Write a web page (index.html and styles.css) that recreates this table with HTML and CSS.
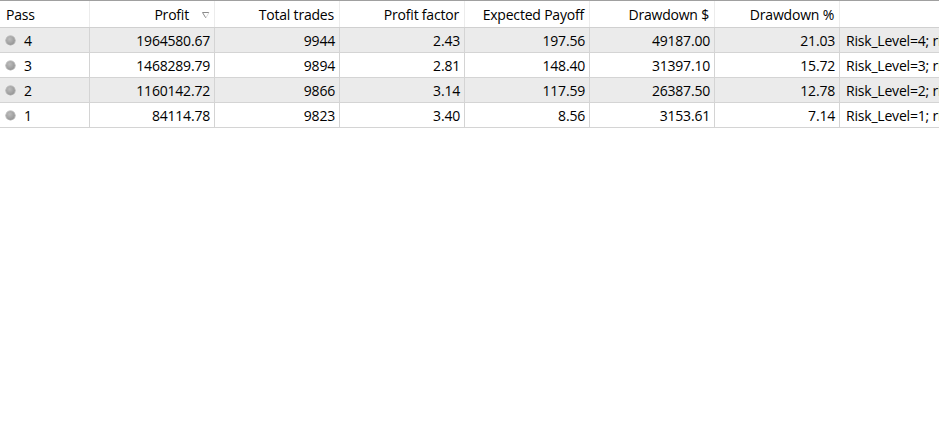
FILE: index.html
```html
<!DOCTYPE html>
<html>
<head>
<meta charset="utf-8">
<link rel="stylesheet" href="styles.css">
</head>
<body>
<div class="table">
  <div class="row head">
    <div class="cell left">Pass</div>
    <div class="cell sorted">Profit<svg class="sort" width="8" height="7" viewBox="0 0 8 7"><path d="M0.5 0.5 H7 M0.5 0.5 L3.8 6" stroke="#8a8a8a" stroke-width="1" fill="none"/><path d="M7 0.5 L3.8 6" stroke="#d8d8d8" stroke-width="1" fill="none"/></svg></div>
    <div class="cell">Total trades</div>
    <div class="cell">Profit factor</div>
    <div class="cell">Expected Payoff</div>
    <div class="cell">Drawdown $</div>
    <div class="cell">Drawdown %</div>
    <div class="cell last"></div>
  </div>
  <div class="row odd">
    <div class="cell left pass"><span class="dot"></span>4</div>
    <div class="cell">1964580.67</div>
    <div class="cell">9944</div>
    <div class="cell">2.43</div>
    <div class="cell">197.56</div>
    <div class="cell">49187.00</div>
    <div class="cell">21.03</div>
    <div class="cell left last">Risk_Level=4; risk_mode=1</div>
  </div>
  <div class="row">
    <div class="cell left pass"><span class="dot"></span>3</div>
    <div class="cell">1468289.79</div>
    <div class="cell">9894</div>
    <div class="cell">2.81</div>
    <div class="cell">148.40</div>
    <div class="cell">31397.10</div>
    <div class="cell">15.72</div>
    <div class="cell left last">Risk_Level=3; risk_mode=1</div>
  </div>
  <div class="row odd">
    <div class="cell left pass"><span class="dot"></span>2</div>
    <div class="cell">1160142.72</div>
    <div class="cell">9866</div>
    <div class="cell">3.14</div>
    <div class="cell">117.59</div>
    <div class="cell">26387.50</div>
    <div class="cell">12.78</div>
    <div class="cell left last">Risk_Level=2; risk_mode=1</div>
  </div>
  <div class="row">
    <div class="cell left pass"><span class="dot"></span>1</div>
    <div class="cell">84114.78</div>
    <div class="cell">9823</div>
    <div class="cell">3.40</div>
    <div class="cell">8.56</div>
    <div class="cell">3153.61</div>
    <div class="cell">7.14</div>
    <div class="cell left last">Risk_Level=1; risk_mode=1</div>
  </div>
</div>
</body>
</html>
```
FILE: styles.css
```css
html, body {
  margin: 0;
  padding: 0;
  background: #ffffff;
}
body {
  font-family: "Open Sans", "Noto Sans", sans-serif;
  font-size: 14px;
  color: #000000;
  width: 939px;
  height: 438px;
  overflow: hidden;
}
.table {
  width: 939px;
  overflow: hidden;
  border-top: 1px solid #a0a0a0;
}
.row {
  display: grid;
  grid-template-columns: 90px repeat(6, 125px) 1fr;
  height: 25px;
  border-bottom: 1px solid #d4d4d4;
  box-sizing: border-box;
}
.row.head {
  height: 27px;
  border-bottom: 1px solid #d0d0d0;
}
.row.odd {
  background: #ebebeb;
}
.cell {
  display: flex;
  align-items: center;
  justify-content: flex-end;
  padding: 0 4px 0 4px;
  border-right: 1px solid #d4d4d4;
  white-space: nowrap;
  overflow: hidden;
  letter-spacing: -0.2px;
}
.head .cell {
  border-right: 1px solid #ececec;
  padding-right: 5px;
}
.cell.left {
  justify-content: flex-start;
  padding-left: 6px;
}
.cell.last {
  border-right: none;
}
.head .sorted {
  padding-right: 4px;
}
.sort {
  margin-left: 13px;
  margin-top: 3px;
}
.pass {
  padding-left: 8px;
}
.dot {
  width: 9px;
  height: 9px;
  border-radius: 50%;
  background: radial-gradient(circle at 40% 35%, #bdbdbd 0%, #a0a0a0 55%, #888888 100%);
  box-shadow: 0 0 0 0.6px #a8a8a8;
  margin-right: 9px;
  flex: none;
}
```
